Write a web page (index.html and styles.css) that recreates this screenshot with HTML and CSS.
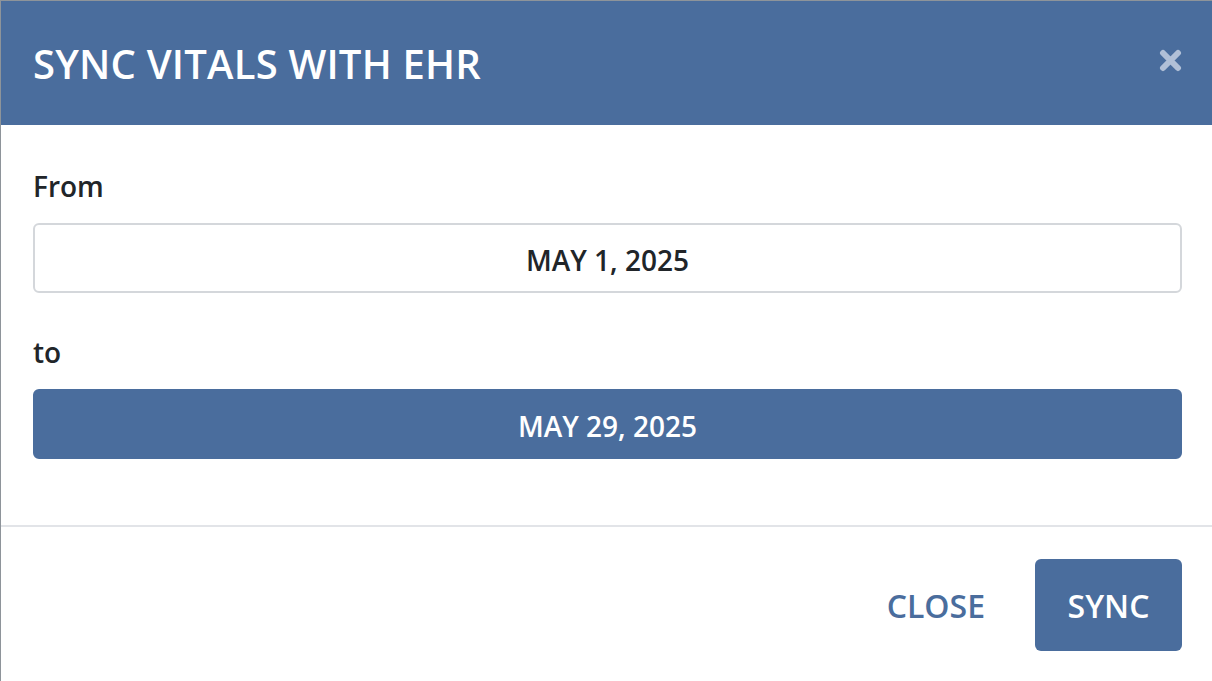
FILE: index.html
```html
<!DOCTYPE html>
<html lang="en">
  <head>
    <meta charset="UTF-8" />
    <meta name="viewport" content="width=device-width, initial-scale=1.0" />
    <title>Sync Vitals With EHR</title>
    <link rel="stylesheet" href="styles.css">
  </head>
  <body>
    <div class="modal">
      <div class="modal-header">
        <h2>SYNC VITALS WITH EHR</h2>
        <button class="close-x" aria-label="Close">
          <svg width="23" height="23" viewBox="0 0 23 23">
            <path d="M4 4 L19 19 M19 4 L4 19" stroke="#b1c0d7" stroke-width="6" stroke-linecap="round" />
          </svg>
        </button>
      </div>
      <div class="modal-body">
        <label>From</label>
        <div class="date-field">MAY 1, 2025</div>
        <label>to</label>
        <div class="date-field active">MAY 29, 2025</div>
      </div>
      <div class="modal-footer">
        <button class="btn-link">CLOSE</button>
        <button class="btn-primary">SYNC</button>
      </div>
    </div>
  </body>
</html>
```

FILE: styles.css
```css
html,
body {
  margin: 0;
  height: 100%;
}
body {
  font-family: "Open Sans", "Noto Sans", sans-serif;
  background: white;
  color: #212529;
}
.modal {
  height: 100%;
  box-sizing: border-box;
  border-top: 1px solid #8e949a;
  border-left: 1px solid #8e949a;
  display: flex;
  flex-direction: column;
}
.modal-header {
  height: 124px;
  background-color: #4a6d9d;
  display: flex;
  align-items: center;
  justify-content: space-between;
  padding: 0 30px 0 32px;
}
.modal-header h2 {
  margin: 0;
  color: white;
  font-size: 40px;
  font-weight: 600;
  letter-spacing: 0.2px;
}
.close-x {
  background: none;
  border: none;
  padding: 0;
  width: 23px;
  height: 23px;
  margin-top: -6px;
  cursor: pointer;
}
.close-x svg {
  display: block;
}
.modal-body {
  padding: 41px 30px 66px 32px;
  display: flex;
  flex-direction: column;
}
.modal-body label {
  font-size: 28px;
  font-weight: 600;
  line-height: 40px;
  margin-bottom: 17px;
}
.date-field {
  height: 70px;
  box-sizing: border-box;
  border: 2px solid #d4d7db;
  border-radius: 6px;
  display: flex;
  align-items: center;
  justify-content: center;
  font-size: 28px;
  font-weight: 600;
  padding-top: 3px;
  margin-bottom: 39px;
}
.date-field.active {
  background-color: #4a6d9d;
  border-color: #4a6d9d;
  color: white;
  margin-bottom: 0;
}
.modal-footer {
  border-top: 2px solid #e2e4e8;
  padding: 32px 30px 30px 0;
  display: flex;
  justify-content: flex-end;
  align-items: center;
}
.modal-footer button {
  font-family: inherit;
  font-size: 32px;
  font-weight: 600;
  cursor: pointer;
}
.btn-link {
  background: none;
  border: none;
  color: #4a6d9d;
  padding: 0;
  margin-right: 50px;
}
.btn-primary {
  background-color: #4a6d9d;
  color: white;
  border: none;
  border-radius: 6px;
  width: 147px;
  height: 92px;
}
```
